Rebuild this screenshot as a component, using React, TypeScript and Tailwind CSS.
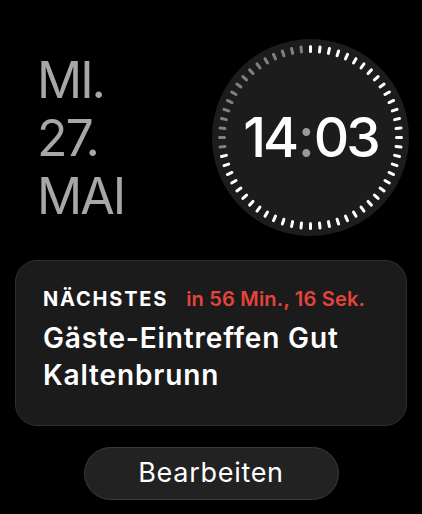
import React from "react";

const ELAPSED = 44;

function ClockFace() {
  const ticks = Array.from({ length: 60 }, (_, i) => {
    const a = (i * 6 * Math.PI) / 180;
    const c = 98.5;
    const r1 = 86;
    const r2 = 91;
    return (
      <line
        key={i}
        x1={c + r1 * Math.sin(a)}
        y1={c - r1 * Math.cos(a)}
        x2={c + r2 * Math.sin(a)}
        y2={c - r2 * Math.cos(a)}
        stroke={i < ELAPSED ? "#ffffff" : "#808080"}
        strokeWidth={3}
        strokeLinecap="round"
      />
    );
  });
  return (
    <div className="relative flex h-[197px] w-[197px] items-center justify-center rounded-full bg-[#1c1c1c]">
      <svg className="absolute inset-0" width="197" height="197" viewBox="0 0 197 197">
        {ticks}
      </svg>
      <div className="relative flex items-center text-[55px] font-medium leading-none tracking-[-3px] text-white">
        <span>14</span>
        <span className="mx-[2px] text-[#9a9a9a]">:</span>
        <span>03</span>
      </div>
    </div>
  );
}

export default function App() {
  return (
    <div
      className="flex h-[514px] w-[422px] flex-col overflow-hidden bg-black"
      style={{ fontFamily: "Inter, 'Liberation Sans', sans-serif" }}
    >
      <div className="flex items-start justify-between pl-[37px] pr-[13px] pt-[39px]">
        <div className="mt-[12px] flex flex-col text-[50px] font-normal leading-[58px] tracking-[-2px] text-[#a7a7a7]">
          <span>MI.</span>
          <span>27.</span>
          <span>MAI</span>
        </div>
        <ClockFace />
      </div>

      <div className="mx-[15px] mt-[24px] h-[166px] rounded-[22px] border border-[#303030] bg-[#1b1b1b] px-[27px] pt-[26px]">
        <div className="flex items-baseline gap-[18px] text-[20px] leading-[24px]">
          <span className="font-bold tracking-[1.8px] text-white">NÄCHSTES</span>
          <span className="font-semibold tracking-[0.2px] text-[#e4443c]">in 56 Min., 16 Sek.</span>
        </div>
        <div className="mt-[9px] text-[28px] font-semibold leading-[37px] tracking-[0.85px] text-white">
          Gäste-Eintreffen Gut
          <br />
          Kaltenbrunn
        </div>
      </div>

      <div className="mt-[21px] flex justify-center">
        <button className="flex h-[53px] w-[255px] items-center justify-center rounded-full border border-[#3a3a3a] bg-[#222222] text-[27px] font-normal tracking-[0.7px] text-white">
          Bearbeiten
        </button>
      </div>
    </div>
  );
}
